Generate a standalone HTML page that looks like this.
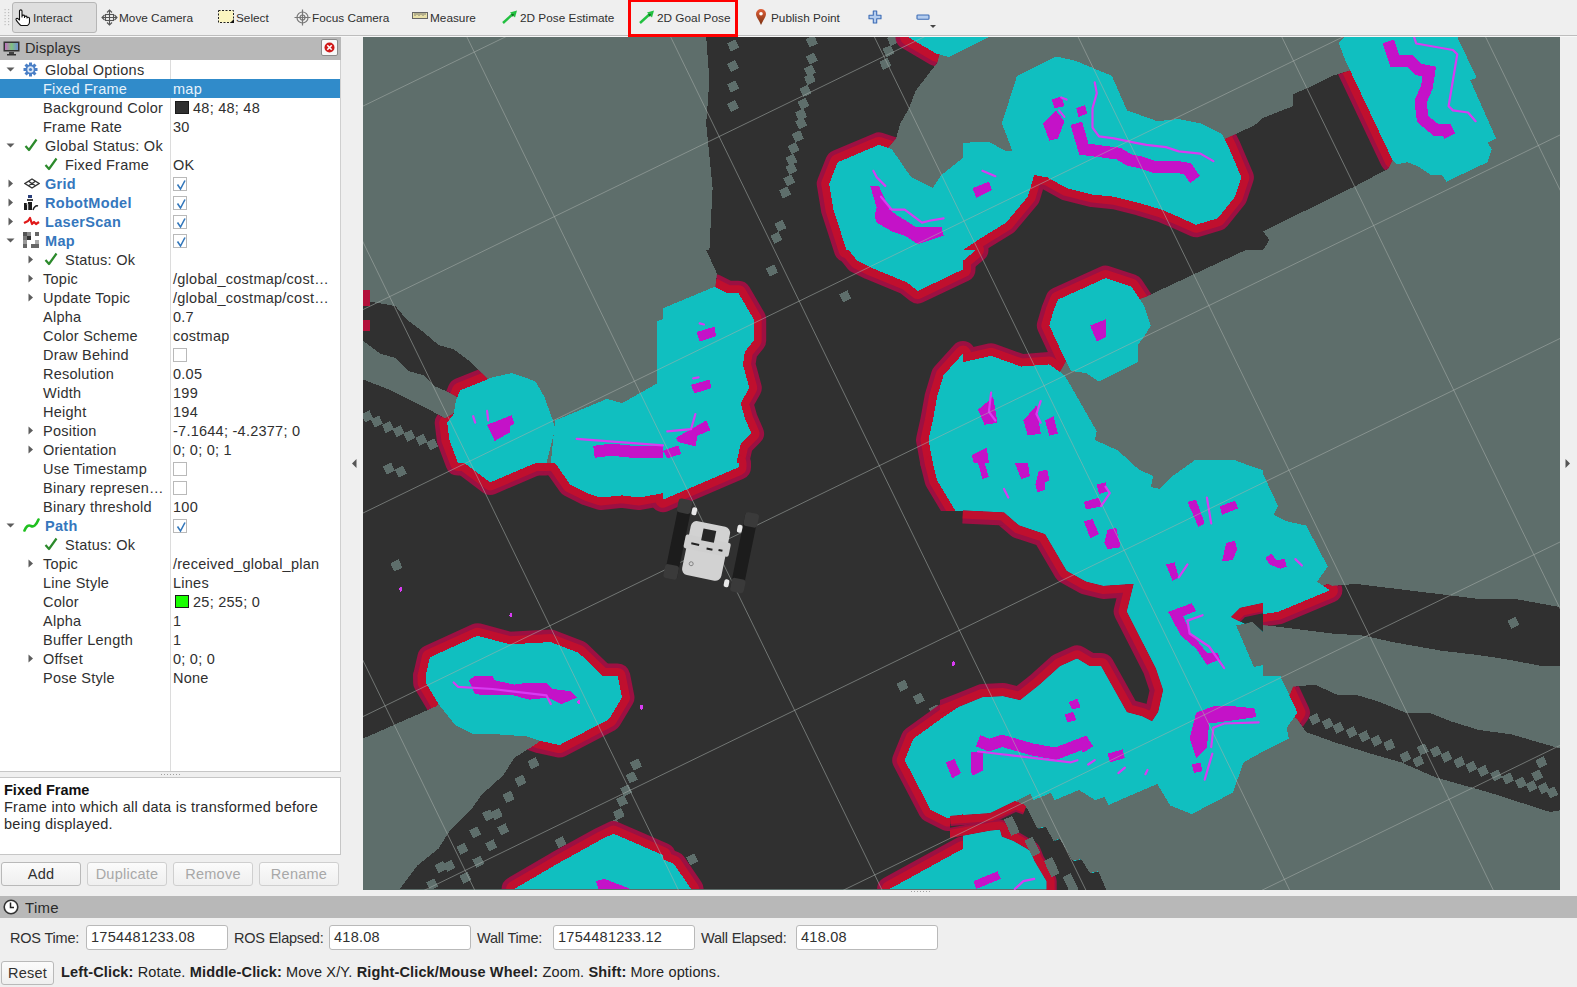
<!DOCTYPE html>
<html><head><meta charset="utf-8"><style>
*{box-sizing:border-box;margin:0;padding:0}
html,body{width:1577px;height:987px;overflow:hidden;background:#efefef;font-family:"Liberation Sans",sans-serif;color:#303030}
.a{position:absolute}
.tb{position:absolute;top:11px;font-size:11.8px;line-height:14px;white-space:nowrap;color:#303030}
.r{position:absolute;left:0;width:340px;height:19px}
.t{position:absolute;top:1px;font-size:14.5px;line-height:19px;letter-spacing:0.25px;white-space:nowrap;color:#303030}
.bb{font-weight:bold;color:#3577bd;letter-spacing:0.3px}
.cb{position:absolute;left:173px;top:3px;width:14px;height:14px;border:1px solid #b9b9b9;background:#fff}
.btn{position:absolute;top:862px;height:24px;border:1px solid #b9b9b9;border-radius:3px;background:linear-gradient(#fbfbfb,#efefef);font-size:14.5px;text-align:center;line-height:22px;letter-spacing:0.25px}
.inp{position:absolute;top:925px;height:25px;border:1px solid #b9b9b9;border-radius:3px;background:#fff;font-size:14.5px;line-height:23px;padding-left:4px;letter-spacing:0.25px;color:#303030}
.lbl{position:absolute;top:929px;font-size:14.5px;letter-spacing:-0.2px;white-space:nowrap;line-height:19px}
</style></head><body>
<!-- toolbar -->
<div class="a" style="left:0;top:0;width:1577px;height:35px;background:#efefef"></div>
<div class="a" style="left:0;top:35px;width:1577px;height:1px;background:#bdbdbd"></div><div class="a" style="left:0;top:36px;width:1577px;height:1px;background:#f8f8f8"></div>
<svg class="a" style="left:3px;top:8px" width="8" height="19"><rect x="1.5" y="1" width="1.2" height="1.2" fill="#bdbdbd"/><rect x="1.5" y="4" width="1.2" height="1.2" fill="#bdbdbd"/><rect x="1.5" y="7" width="1.2" height="1.2" fill="#bdbdbd"/><rect x="1.5" y="10" width="1.2" height="1.2" fill="#bdbdbd"/><rect x="1.5" y="13" width="1.2" height="1.2" fill="#bdbdbd"/><rect x="1.5" y="16" width="1.2" height="1.2" fill="#bdbdbd"/><rect x="5" y="1" width="1.2" height="1.2" fill="#bdbdbd"/><rect x="5" y="4" width="1.2" height="1.2" fill="#bdbdbd"/><rect x="5" y="7" width="1.2" height="1.2" fill="#bdbdbd"/><rect x="5" y="10" width="1.2" height="1.2" fill="#bdbdbd"/><rect x="5" y="13" width="1.2" height="1.2" fill="#bdbdbd"/><rect x="5" y="16" width="1.2" height="1.2" fill="#bdbdbd"/></svg>
<div class="a" style="left:12px;top:2px;width:85px;height:31px;background:#dedede;border:1px solid #b6b6b6;border-radius:3px"></div>
<svg class="a" style="left:15px;top:8px" width="17" height="18" viewBox="0 0 17 18"><path d="M4.5 12 V3 C4.5 1.5 7 1.5 7 3 V9 V8 C7 6.8 9.5 6.8 9.5 8 V9.5 V9 C9.5 7.8 12 7.8 12 9 V10 C12 9 14.5 9 14.5 10.5 V14 C14.5 16 13 17.5 12 17.5 H6 C5 17 2 13.5 1.2 12 C0.6 10.8 2 9.8 3.2 10.8 Z" fill="#fff" stroke="#111" stroke-width="1.1" stroke-linejoin="round"/></svg>
<span class="tb" style="left:33px">Interact</span>
<svg class="a" style="left:101px;top:9px" width="17" height="17" viewBox="0 0 17 17"><g fill="none" stroke="#555" stroke-width="1.1"><path d="M8.5 1 V16 M1 8.5 H16"/><path d="M6 3.5 L8.5 1 L11 3.5 M6 13.5 L8.5 16 L11 13.5 M3.5 6 L1 8.5 L3.5 11 M13.5 6 L16 8.5 L13.5 11"/><rect x="4.5" y="5.5" width="8" height="6"/></g></svg>
<span class="tb" style="left:119px">Move Camera</span>
<svg class="a" style="left:218px;top:10px" width="17" height="14" viewBox="0 0 17 14"><rect x="0.5" y="0.5" width="15" height="12" fill="#fbf5c0" stroke="#222" stroke-width="1" stroke-dasharray="2 1.5"/><path d="M16 9 V13 H12Z" fill="#111"/></svg>
<span class="tb" style="left:236px">Select</span>
<svg class="a" style="left:294px;top:9px" width="17" height="17" viewBox="0 0 17 17"><g fill="none" stroke="#777" stroke-width="1.2"><circle cx="8.5" cy="8.5" r="5.5"/><circle cx="8.5" cy="8.5" r="2.5"/><path d="M8.5 0.5 V16.5 M0.5 8.5 H16.5"/></g></svg>
<span class="tb" style="left:312px">Focus Camera</span>
<svg class="a" style="left:412px;top:12px" width="16" height="8" viewBox="0 0 16 8"><rect x="0.5" y="0.5" width="15" height="6" fill="#e8e0a8" stroke="#666" stroke-width="1"/><path d="M3 1v3M5 1v2M7 1v3M9 1v2M11 1v3M13 1v2" stroke="#666" stroke-width="0.8"/></svg>
<span class="tb" style="left:430px">Measure</span>
<svg class="a" style="left:502px;top:10px" width="16" height="14" viewBox="0 0 16 14"><path d="M1 13 L12 3" stroke="#22c040" stroke-width="2.4"/><path d="M8 2.5 L15 0.5 L13 7.5Z" fill="#22c040"/><path d="M9 4 L12 4 L11 7" fill="#127020"/></svg>
<span class="tb" style="left:520px">2D Pose Estimate</span>
<div class="a" style="left:628px;top:-1px;width:110px;height:37.5px;border:3.5px solid #ff0000"></div>
<svg class="a" style="left:639px;top:10px" width="16" height="14" viewBox="0 0 16 14"><path d="M1 13 L12 3" stroke="#22c040" stroke-width="2.4"/><path d="M8 2.5 L15 0.5 L13 7.5Z" fill="#22c040"/><path d="M9 4 L12 4 L11 7" fill="#127020"/></svg>
<span class="tb" style="left:657px">2D Goal Pose</span>
<svg class="a" style="left:755px;top:8px" width="12" height="18" viewBox="0 0 12 18"><defs><linearGradient id="pin" x1="0" y1="0" x2="0" y2="1"><stop offset="0" stop-color="#e0603a"/><stop offset="1" stop-color="#7a3010"/></linearGradient></defs><path d="M6 17 C4 12 1 9 1 6 A5 5 0 0 1 11 6 C11 9 8 12 6 17Z" fill="url(#pin)"/><circle cx="6" cy="5.8" r="1.8" fill="#fff"/></svg>
<span class="tb" style="left:771px">Publish Point</span>
<svg class="a" style="left:868px;top:10px" width="14" height="14" viewBox="0 0 14 14"><path d="M5.3 1 H8.7 V5.3 H13 V8.7 H8.7 V13 H5.3 V8.7 H1 V5.3 H5.3Z" fill="#b4cdef" stroke="#3d6cb5" stroke-width="1.1" stroke-linejoin="round"/></svg>
<svg class="a" style="left:916px;top:14px" width="14" height="7" viewBox="0 0 14 7"><rect x="1" y="1" width="12" height="4.2" rx="0.8" fill="#b4cdef" stroke="#3d6cb5" stroke-width="1.1"/></svg>
<svg class="a" style="left:930px;top:25px" width="6" height="4"><path d="M0 0 H6 L3 3Z" fill="#444"/></svg>

<!-- displays panel -->
<div class="a" style="left:0;top:37px;width:341px;height:23px;background:#b8b8b8"></div>
<svg class="a" style="left:3px;top:41px" width="17" height="15" viewBox="0 0 17 15"><rect x="0.5" y="0.5" width="16" height="10" fill="#333"/><rect x="2" y="2" width="13" height="7" fill="url(#mong)"/><rect x="6" y="11" width="5" height="2" fill="#444"/><rect x="4" y="13" width="9" height="1.5" fill="#333"/><defs><linearGradient id="mong" x1="0" x2="1"><stop offset="0" stop-color="#c070c0"/><stop offset="0.5" stop-color="#80c080"/><stop offset="1" stop-color="#7090d0"/></linearGradient></defs></svg>
<span class="a" style="left:25px;top:39px;font-size:14.5px;line-height:19px;letter-spacing:0.1px;color:#2a2a2a">Displays</span>
<div class="a" style="left:321px;top:39px;width:17px;height:17px;background:#f8f8f8;border:1px solid #8a8a8a;border-radius:2px"></div>
<svg class="a" style="left:324px;top:42px" width="11" height="11" viewBox="0 0 11 11"><circle cx="5.5" cy="5.5" r="5" fill="#d01818"/><path d="M3.3 3.3 L7.7 7.7 M7.7 3.3 L3.3 7.7" stroke="#fff" stroke-width="1.6"/></svg>
<div class="a" style="left:0;top:60px;width:341px;height:712px;background:#fff;border-right:1px solid #cfcfcf;border-bottom:1px solid #c6c6c6"></div>
<div class="a" style="left:170px;top:60px;width:1px;height:711px;background:#dcdcdc"></div>
<div class="r" style="top:60px"><svg class="a" style="left:6px;top:7px" width="9" height="6"><path d="M0.5 0.5 L8.5 0.5 L4.5 4.5Z" fill="#5c5c5c"/></svg><svg class="a" style="left:23px;top:2px" width="15" height="15" viewBox="0 0 15 15"><g fill="#4a7fc6"><circle cx="7.5" cy="7.5" r="5"/><rect x="6" y="0.5" width="3" height="3" transform="rotate(0 7.5 7.5)"/><rect x="6" y="0.5" width="3" height="3" transform="rotate(45 7.5 7.5)"/><rect x="6" y="0.5" width="3" height="3" transform="rotate(90 7.5 7.5)"/><rect x="6" y="0.5" width="3" height="3" transform="rotate(135 7.5 7.5)"/><rect x="6" y="0.5" width="3" height="3" transform="rotate(180 7.5 7.5)"/><rect x="6" y="0.5" width="3" height="3" transform="rotate(225 7.5 7.5)"/><rect x="6" y="0.5" width="3" height="3" transform="rotate(270 7.5 7.5)"/><rect x="6" y="0.5" width="3" height="3" transform="rotate(315 7.5 7.5)"/></g><circle cx="7.5" cy="7.5" r="3.2" fill="#dce8f6"/><circle cx="7.5" cy="7.5" r="1.6" fill="#4a7fc6"/></svg><span class="t" style="left:45px">Global Options</span></div><div class="r" style="top:79px"><div class="a" style="left:0;top:0;width:340px;height:19px;background:#308bca"></div><span class="t" style="left:43px;color:#e6f2fb">Fixed Frame</span><span class="t" style="left:173px;color:#e6f2fb">map</span></div><div class="r" style="top:98px"><span class="t" style="left:43px">Background Color</span><div class="a" style="left:175px;top:3px;width:14px;height:13px;background:#303030;border:1px solid #1a1a1a"></div><span class="t" style="left:193px">48; 48; 48</span></div><div class="r" style="top:117px"><span class="t" style="left:43px">Frame Rate</span><span class="t" style="left:173px">30</span></div><div class="r" style="top:136px"><svg class="a" style="left:6px;top:7px" width="9" height="6"><path d="M0.5 0.5 L8.5 0.5 L4.5 4.5Z" fill="#5c5c5c"/></svg><svg class="a" style="left:24px;top:2px" width="14" height="14"><path d="M1.5 8 L5 12 L12.5 1.5" fill="none" stroke="#2c8a2c" stroke-width="2.2" stroke-linejoin="round"/></svg><span class="t" style="left:45px">Global Status: Ok</span></div><div class="r" style="top:155px"><svg class="a" style="left:44px;top:2px" width="14" height="14"><path d="M1.5 8 L5 12 L12.5 1.5" fill="none" stroke="#2c8a2c" stroke-width="2.2" stroke-linejoin="round"/></svg><span class="t" style="left:65px">Fixed Frame</span><span class="t" style="left:173px">OK</span></div><div class="r" style="top:174px"><svg class="a" style="left:8px;top:5px" width="6" height="9"><path d="M0.5 0.5 L5 4.5 L0.5 8.5Z" fill="#5c5c5c"/></svg><svg class="a" style="left:24px;top:4px" width="16" height="11" viewBox="0 0 16 11"><path d="M8 1 L15 5.5 L8 10 L1 5.5Z M4.5 3.2 L11.5 7.8 M11.5 3.2 L4.5 7.8" fill="none" stroke="#333" stroke-width="1.3"/></svg><span class="t bb" style="left:45px">Grid</span><div class="cb"><svg class="a" style="left:1px;top:1px" width="12" height="12"><path d="M2.5 5.5 L5.5 10 L10 1.5" fill="none" stroke="#3377bb" stroke-width="1.6"/></svg></div></div><div class="r" style="top:193px"><svg class="a" style="left:8px;top:5px" width="6" height="9"><path d="M0.5 0.5 L5 4.5 L0.5 8.5Z" fill="#5c5c5c"/></svg><svg class="a" style="left:23px;top:1px" width="17" height="17" viewBox="0 0 17 17"><rect x="5" y="1" width="4" height="3" fill="#2a3f7a"/><rect x="4" y="5" width="6" height="2" fill="#444"/><path d="M1 16 V9 h3 v7Z M5 16 V8 h4 v8z" fill="#1a1a1a"/><path d="M10 16 q2 -5 5 -4" fill="none" stroke="#222" stroke-width="1.5"/><path d="M3 10h2v6" stroke="#aaa" stroke-width="0.8" fill="none"/></svg><span class="t bb" style="left:45px">RobotModel</span><div class="cb"><svg class="a" style="left:1px;top:1px" width="12" height="12"><path d="M2.5 5.5 L5.5 10 L10 1.5" fill="none" stroke="#3377bb" stroke-width="1.6"/></svg></div></div><div class="r" style="top:212px"><svg class="a" style="left:8px;top:5px" width="6" height="9"><path d="M0.5 0.5 L5 4.5 L0.5 8.5Z" fill="#5c5c5c"/></svg><svg class="a" style="left:23px;top:4px" width="17" height="11" viewBox="0 0 17 11"><path d="M1 7 L5 5 L7 2 L9 8 L11 6 L13 8 L16 6" fill="none" stroke="#e01818" stroke-width="2.2" stroke-linejoin="round"/></svg><span class="t bb" style="left:45px">LaserScan</span><div class="cb"><svg class="a" style="left:1px;top:1px" width="12" height="12"><path d="M2.5 5.5 L5.5 10 L10 1.5" fill="none" stroke="#3377bb" stroke-width="1.6"/></svg></div></div><div class="r" style="top:231px"><svg class="a" style="left:6px;top:7px" width="9" height="6"><path d="M0.5 0.5 L8.5 0.5 L4.5 4.5Z" fill="#5c5c5c"/></svg><svg class="a" style="left:23px;top:1px" width="16" height="16" viewBox="0 0 16 16"><g fill="#555"><rect x="0" y="0" width="4" height="4"/><rect x="4" y="0" width="4" height="4" fill="#888"/><rect x="0" y="4" width="4" height="4" fill="#777"/><rect x="4" y="4" width="4" height="4" fill="#333"/><rect x="12" y="0" width="4" height="4" fill="#666"/><rect x="0" y="8" width="4" height="4" fill="#999"/><rect x="0" y="12" width="4" height="4" fill="#666"/><rect x="8" y="12" width="8" height="4" fill="#666"/><rect x="12" y="8" width="4" height="4" fill="#aaa"/></g></svg><span class="t bb" style="left:45px">Map</span><div class="cb"><svg class="a" style="left:1px;top:1px" width="12" height="12"><path d="M2.5 5.5 L5.5 10 L10 1.5" fill="none" stroke="#3377bb" stroke-width="1.6"/></svg></div></div><div class="r" style="top:250px"><svg class="a" style="left:28px;top:5px" width="6" height="9"><path d="M0.5 0.5 L5 4.5 L0.5 8.5Z" fill="#5c5c5c"/></svg><svg class="a" style="left:44px;top:2px" width="14" height="14"><path d="M1.5 8 L5 12 L12.5 1.5" fill="none" stroke="#2c8a2c" stroke-width="2.2" stroke-linejoin="round"/></svg><span class="t" style="left:65px">Status: Ok</span></div><div class="r" style="top:269px"><svg class="a" style="left:28px;top:5px" width="6" height="9"><path d="M0.5 0.5 L5 4.5 L0.5 8.5Z" fill="#5c5c5c"/></svg><span class="t" style="left:43px">Topic</span><span class="t" style="left:173px">/global_costmap/cost…</span></div><div class="r" style="top:288px"><svg class="a" style="left:28px;top:5px" width="6" height="9"><path d="M0.5 0.5 L5 4.5 L0.5 8.5Z" fill="#5c5c5c"/></svg><span class="t" style="left:43px">Update Topic</span><span class="t" style="left:173px">/global_costmap/cost…</span></div><div class="r" style="top:307px"><span class="t" style="left:43px">Alpha</span><span class="t" style="left:173px">0.7</span></div><div class="r" style="top:326px"><span class="t" style="left:43px">Color Scheme</span><span class="t" style="left:173px">costmap</span></div><div class="r" style="top:345px"><span class="t" style="left:43px">Draw Behind</span><div class="cb"></div></div><div class="r" style="top:364px"><span class="t" style="left:43px">Resolution</span><span class="t" style="left:173px">0.05</span></div><div class="r" style="top:383px"><span class="t" style="left:43px">Width</span><span class="t" style="left:173px">199</span></div><div class="r" style="top:402px"><span class="t" style="left:43px">Height</span><span class="t" style="left:173px">194</span></div><div class="r" style="top:421px"><svg class="a" style="left:28px;top:5px" width="6" height="9"><path d="M0.5 0.5 L5 4.5 L0.5 8.5Z" fill="#5c5c5c"/></svg><span class="t" style="left:43px">Position</span><span class="t" style="left:173px">-7.1644; -4.2377; 0</span></div><div class="r" style="top:440px"><svg class="a" style="left:28px;top:5px" width="6" height="9"><path d="M0.5 0.5 L5 4.5 L0.5 8.5Z" fill="#5c5c5c"/></svg><span class="t" style="left:43px">Orientation</span><span class="t" style="left:173px">0; 0; 0; 1</span></div><div class="r" style="top:459px"><span class="t" style="left:43px">Use Timestamp</span><div class="cb"></div></div><div class="r" style="top:478px"><span class="t" style="left:43px">Binary represen…</span><div class="cb"></div></div><div class="r" style="top:497px"><span class="t" style="left:43px">Binary threshold</span><span class="t" style="left:173px">100</span></div><div class="r" style="top:516px"><svg class="a" style="left:6px;top:7px" width="9" height="6"><path d="M0.5 0.5 L8.5 0.5 L4.5 4.5Z" fill="#5c5c5c"/></svg><svg class="a" style="left:23px;top:2px" width="17" height="14" viewBox="0 0 17 14"><path d="M1.5 12.5 Q4 6 8 8 T15.5 1.5" fill="none" stroke="#20c020" stroke-width="2.6" stroke-linecap="round"/></svg><span class="t bb" style="left:45px">Path</span><div class="cb"><svg class="a" style="left:1px;top:1px" width="12" height="12"><path d="M2.5 5.5 L5.5 10 L10 1.5" fill="none" stroke="#3377bb" stroke-width="1.6"/></svg></div></div><div class="r" style="top:535px"><svg class="a" style="left:44px;top:2px" width="14" height="14"><path d="M1.5 8 L5 12 L12.5 1.5" fill="none" stroke="#2c8a2c" stroke-width="2.2" stroke-linejoin="round"/></svg><span class="t" style="left:65px">Status: Ok</span></div><div class="r" style="top:554px"><svg class="a" style="left:28px;top:5px" width="6" height="9"><path d="M0.5 0.5 L5 4.5 L0.5 8.5Z" fill="#5c5c5c"/></svg><span class="t" style="left:43px">Topic</span><span class="t" style="left:173px">/received_global_plan</span></div><div class="r" style="top:573px"><span class="t" style="left:43px">Line Style</span><span class="t" style="left:173px">Lines</span></div><div class="r" style="top:592px"><span class="t" style="left:43px">Color</span><div class="a" style="left:175px;top:3px;width:14px;height:13px;background:#19ff00;border:1px solid #1a1a1a"></div><span class="t" style="left:193px">25; 255; 0</span></div><div class="r" style="top:611px"><span class="t" style="left:43px">Alpha</span><span class="t" style="left:173px">1</span></div><div class="r" style="top:630px"><span class="t" style="left:43px">Buffer Length</span><span class="t" style="left:173px">1</span></div><div class="r" style="top:649px"><svg class="a" style="left:28px;top:5px" width="6" height="9"><path d="M0.5 0.5 L5 4.5 L0.5 8.5Z" fill="#5c5c5c"/></svg><span class="t" style="left:43px">Offset</span><span class="t" style="left:173px">0; 0; 0</span></div><div class="r" style="top:668px"><span class="t" style="left:43px">Pose Style</span><span class="t" style="left:173px">None</span></div>
<div class="a" style="left:160px;top:774px;width:20px;height:1px;background-image:radial-gradient(#a0a0a0 0.6px,transparent 0.8px);background-size:3px 1px"></div>
<div class="a" style="left:0;top:777px;width:341px;height:78px;background:#fff;border:1px solid #c6c6c6;border-left:none"></div>
<span class="a" style="left:4px;top:782px;font-size:14.5px;line-height:17px;font-weight:bold;color:#111;letter-spacing:0px">Fixed Frame</span>
<span class="a" style="left:4px;top:799px;font-size:14.5px;line-height:17px;letter-spacing:0.25px;color:#2a2a2a;white-space:nowrap">Frame into which all data is transformed before</span>
<span class="a" style="left:4px;top:816px;font-size:14.5px;line-height:17px;letter-spacing:0.25px;color:#2a2a2a">being displayed.</span>
<div class="btn" style="left:1px;width:80px">Add</div>
<div class="btn" style="left:87px;width:80px;color:#a8a8a8;border-color:#cfcfcf">Duplicate</div>
<div class="btn" style="left:173px;width:80px;color:#a8a8a8;border-color:#cfcfcf">Remove</div>
<div class="btn" style="left:259px;width:80px;color:#a8a8a8;border-color:#cfcfcf">Rename</div>

<!-- splitters -->
<svg class="a" style="left:352px;top:459px" width="5" height="9"><path d="M4.5 0 V9 L0 4.5Z" fill="#555"/></svg>
<svg class="a" style="left:1565px;top:459px" width="5" height="9"><path d="M0.5 0 V9 L5 4.5Z" fill="#555"/></svg>

<!-- map -->
<div class="a" style="left:363px;top:37px;width:1197px;height:853px;overflow:hidden"><svg width="1197" height="853" viewBox="0 0 1197 853" shape-rendering="crispEdges">
<rect width="1197" height="853" fill="#5e6e6b"/>
<g fill="#303030"><polygon points="343.2,0.0 580.6,0.0 574.1,25.9 552.5,54.0 546.1,71.2 537.4,86.3 533.1,101.4 515.8,120.9 494.3,140.3 483.5,213.0 346.4,213.0 349.6,151.1 343.2,86.3 346.4,43.2"/><polygon points="600.0,213.0 621.6,194.3 654.0,151.1 671.2,129.5 703.6,140.3 751.1,151.1 813.7,168.4 854.7,170.5 867.6,140.3 859.0,103.6 900.0,84.2 900.0,213.0"/><polygon points="900.0,80.9 930.2,69.1 930.2,57.2 945.3,50.7 969.1,38.9 990.7,32.4 1020.9,97.1 1029.5,123.0 1025.2,131.7 992.8,148.9 900.0,194.3 906.5,202.9 900.0,213.0 835.2,213.0 874.1,103.6"/><polygon points="0.0,269.1 8.6,264.8 32.4,269.1 43.2,282.1 60.4,295.0 75.5,308.0 90.7,312.3 107.9,325.2 129.5,346.8 101.4,364.1 86.3,355.5 71.2,349.0 60.4,338.2 45.3,333.9 32.4,320.9 17.3,316.6 0.0,303.7"/><polygon points="0.0,342.5 28.1,353.3 62.6,370.6 82.0,381.4 97.1,372.7 101.4,426.0 0.0,426.0"/><polygon points="343.2,213.0 600.0,213.0 600.0,426.0 300.0,426.0 300.0,282.1 351.8,256.2 354.0,236.7"/><polygon points="600.0,213.0 882.8,213.0 783.5,259.4 729.5,277.8 697.1,333.9 675.5,342.5 656.1,342.5 628.1,329.6 600.0,333.9"/><polygon points="0.0,426.0 300.0,426.0 300.0,639.0 0.0,639.0"/><polygon points="300.0,426.0 600.0,426.0 600.0,639.0 300.0,639.0"/><polygon points="900.0,574.9 964.8,546.9 969.1,549.0 992.8,546.9 1081.3,557.7 1115.8,562.0 1152.5,562.0 1200.0,570.6 1200.0,628.9 1178.4,628.9 1143.9,622.4 1115.8,618.1 1079.1,613.8 1029.5,605.1 1001.4,598.7 969.1,596.5 934.5,592.2 900.0,587.9"/><polygon points="0.0,639.0 300.0,639.0 300.0,852.0 0.0,852.0"/><polygon points="300.0,639.0 600.0,639.0 600.0,852.0 300.0,852.0"/><polygon points="930.2,649.8 951.8,647.6 975.5,658.4 995.0,658.4 1016.6,664.9 1042.5,675.7 1066.2,675.7 1087.8,684.3 1115.8,693.0 1148.2,697.3 1200.0,712.4 1200.0,772.8 1187.1,775.0 1126.6,755.6 1072.7,740.4 1038.1,725.3 1007.9,716.7 973.4,705.9 943.2,695.1 934.5,682.2 921.6,671.4"/></g>
<g fill="#5e6e6b"><rect x="365.6" y="4.1" width="9" height="9" transform="rotate(-26 370.1 8.6)"/><rect x="365.6" y="24.6" width="9" height="9" transform="rotate(-26 370.1 29.1)"/><rect x="365.6" y="45.1" width="9" height="9" transform="rotate(-26 370.1 49.6)"/><rect x="365.6" y="64.6" width="9" height="9" transform="rotate(-26 370.1 69.1)"/><rect x="444.4" y="-0.2" width="9" height="9" transform="rotate(-26 448.9 4.3)"/><rect x="444.4" y="17.1" width="9" height="9" transform="rotate(-26 448.9 21.6)"/><rect x="442.3" y="29.0" width="9" height="9" transform="rotate(-26 446.8 33.5)"/><rect x="442.3" y="37.6" width="9" height="9" transform="rotate(-26 446.8 42.1)"/><rect x="438.0" y="49.5" width="9" height="9" transform="rotate(-26 442.5 54.0)"/><rect x="435.8" y="62.4" width="9" height="9" transform="rotate(-26 440.3 66.9)"/><rect x="433.6" y="73.2" width="9" height="9" transform="rotate(-26 438.1 77.7)"/><rect x="433.6" y="81.8" width="9" height="9" transform="rotate(-26 438.1 86.3)"/><rect x="430.4" y="94.8" width="9" height="9" transform="rotate(-26 434.9 99.3)"/><rect x="426.1" y="106.7" width="9" height="9" transform="rotate(-26 430.6 111.2)"/><rect x="423.9" y="118.5" width="9" height="9" transform="rotate(-26 428.4 123.0)"/><rect x="423.9" y="127.2" width="9" height="9" transform="rotate(-26 428.4 131.7)"/><rect x="421.8" y="139.0" width="9" height="9" transform="rotate(-26 426.3 143.5)"/><rect x="417.5" y="150.9" width="9" height="9" transform="rotate(-26 422.0 155.4)"/><rect x="413.1" y="184.4" width="9" height="9" transform="rotate(-26 417.6 188.9)"/><rect x="408.8" y="196.2" width="9" height="9" transform="rotate(-26 413.3 200.7)"/><rect x="525.4" y="-1.3" width="9" height="9" transform="rotate(-26 529.9 3.2)"/><rect x="521.1" y="9.5" width="9" height="9" transform="rotate(-26 525.6 14.0)"/><rect x="517.8" y="22.5" width="9" height="9" transform="rotate(-26 522.3 27.0)"/><rect x="-0.2" y="374.7" width="9" height="9" transform="rotate(-26 4.3 379.2)"/><rect x="9.5" y="380.1" width="9" height="9" transform="rotate(-26 14.0 384.6)"/><rect x="20.3" y="385.5" width="9" height="9" transform="rotate(-26 24.8 390.0)"/><rect x="31.1" y="389.8" width="9" height="9" transform="rotate(-26 35.6 394.3)"/><rect x="41.9" y="394.1" width="9" height="9" transform="rotate(-26 46.4 398.6)"/><rect x="53.8" y="398.4" width="9" height="9" transform="rotate(-26 58.3 402.9)"/><rect x="64.6" y="402.8" width="9" height="9" transform="rotate(-26 69.1 407.3)"/><rect x="79.7" y="406.0" width="9" height="9" transform="rotate(-26 84.2 410.5)"/><rect x="404.5" y="229.0" width="9" height="9" transform="rotate(-26 409.0 233.5)"/><rect x="477.9" y="254.9" width="9" height="9" transform="rotate(-26 482.4 259.4)"/><rect x="494.1" y="226.8" width="9" height="9" transform="rotate(-26 498.6 231.3)"/><rect x="21.4" y="426.9" width="9" height="9" transform="rotate(-26 25.9 431.4)"/><rect x="33.3" y="430.1" width="9" height="9" transform="rotate(-26 37.8 434.6)"/><rect x="29.0" y="524.0" width="9" height="9" transform="rotate(-26 33.5 528.5)"/><rect x="779.0" y="455.0" width="9" height="9" transform="rotate(-26 783.5 459.5)"/><rect x="1145.9" y="581.2" width="9" height="9" transform="rotate(-26 1150.4 585.7)"/><rect x="166.0" y="721.9" width="9" height="9" transform="rotate(-26 170.5 726.4)"/><rect x="153.1" y="739.2" width="9" height="9" transform="rotate(-26 157.6 743.7)"/><rect x="141.2" y="755.4" width="9" height="9" transform="rotate(-26 145.7 759.9)"/><rect x="120.7" y="773.7" width="9" height="9" transform="rotate(-26 125.2 778.2)"/><rect x="129.3" y="772.6" width="9" height="9" transform="rotate(-26 133.8 777.1)"/><rect x="135.8" y="787.7" width="9" height="9" transform="rotate(-26 140.3 792.2)"/><rect x="107.7" y="791.0" width="9" height="9" transform="rotate(-26 112.2 795.5)"/><rect x="123.9" y="803.9" width="9" height="9" transform="rotate(-26 128.4 808.4)"/><rect x="94.8" y="807.2" width="9" height="9" transform="rotate(-26 99.3 811.7)"/><rect x="111.0" y="820.1" width="9" height="9" transform="rotate(-26 115.5 824.6)"/><rect x="73.2" y="825.5" width="9" height="9" transform="rotate(-26 77.7 830.0)"/><rect x="81.8" y="824.4" width="9" height="9" transform="rotate(-26 86.3 828.9)"/><rect x="98.0" y="836.3" width="9" height="9" transform="rotate(-26 102.5 840.8)"/><rect x="64.6" y="842.8" width="9" height="9" transform="rotate(-26 69.1 847.3)"/><rect x="268.5" y="723.0" width="9" height="9" transform="rotate(-26 273.0 727.5)"/><rect x="264.2" y="735.9" width="9" height="9" transform="rotate(-26 268.7 740.4)"/><rect x="258.8" y="748.9" width="9" height="9" transform="rotate(-26 263.3 753.4)"/><rect x="254.5" y="759.7" width="9" height="9" transform="rotate(-26 259.0 764.2)"/><rect x="251.3" y="772.6" width="9" height="9" transform="rotate(-26 255.8 777.1)"/><rect x="247.0" y="783.4" width="9" height="9" transform="rotate(-26 251.5 787.9)"/><rect x="242.6" y="795.3" width="9" height="9" transform="rotate(-26 247.1 799.8)"/><rect x="193.0" y="800.7" width="9" height="9" transform="rotate(-26 197.5 805.2)"/><rect x="535.1" y="644.2" width="9" height="9" transform="rotate(-26 539.6 648.7)"/><rect x="551.3" y="657.2" width="9" height="9" transform="rotate(-26 555.8 661.7)"/><rect x="567.5" y="669.0" width="9" height="9" transform="rotate(-26 572.0 673.5)"/><rect x="324.6" y="818.0" width="9" height="9" transform="rotate(-26 329.1 822.5)"/><rect x="934.4" y="673.4" width="9" height="9" transform="rotate(-26 938.9 677.9)"/><rect x="947.3" y="677.7" width="9" height="9" transform="rotate(-26 951.8 682.2)"/><rect x="960.3" y="682.0" width="9" height="9" transform="rotate(-26 964.8 686.5)"/><rect x="971.0" y="686.3" width="9" height="9" transform="rotate(-26 975.5 690.8)"/><rect x="984.0" y="690.6" width="9" height="9" transform="rotate(-26 988.5 695.1)"/><rect x="996.9" y="694.9" width="9" height="9" transform="rotate(-26 1001.4 699.4)"/><rect x="1008.8" y="699.3" width="9" height="9" transform="rotate(-26 1013.3 703.8)"/><rect x="1021.8" y="703.6" width="9" height="9" transform="rotate(-26 1026.3 708.1)"/><rect x="1038.0" y="715.4" width="9" height="9" transform="rotate(-26 1042.5 719.9)"/><rect x="1050.9" y="719.8" width="9" height="9" transform="rotate(-26 1055.4 724.3)"/><rect x="1055.2" y="707.9" width="9" height="9" transform="rotate(-26 1059.7 712.4)"/><rect x="1068.2" y="710.0" width="9" height="9" transform="rotate(-26 1072.7 714.5)"/><rect x="1079.0" y="715.4" width="9" height="9" transform="rotate(-26 1083.5 719.9)"/><rect x="1091.9" y="720.8" width="9" height="9" transform="rotate(-26 1096.4 725.3)"/><rect x="1103.8" y="725.2" width="9" height="9" transform="rotate(-26 1108.3 729.7)"/><rect x="1115.7" y="729.5" width="9" height="9" transform="rotate(-26 1120.2 734.0)"/><rect x="1128.6" y="733.8" width="9" height="9" transform="rotate(-26 1133.1 738.3)"/><rect x="1140.5" y="737.0" width="9" height="9" transform="rotate(-26 1145.0 741.5)"/><rect x="1153.4" y="741.3" width="9" height="9" transform="rotate(-26 1157.9 745.8)"/><rect x="1164.2" y="744.6" width="9" height="9" transform="rotate(-26 1168.7 749.1)"/><rect x="1173.9" y="720.8" width="9" height="9" transform="rotate(-26 1178.4 725.3)"/><rect x="1169.6" y="733.8" width="9" height="9" transform="rotate(-26 1174.1 738.3)"/><rect x="1176.1" y="746.7" width="9" height="9" transform="rotate(-26 1180.6 751.2)"/><rect x="1184.7" y="751.1" width="9" height="9" transform="rotate(-26 1189.2 755.6)"/></g>
<defs><clipPath id="darkclip"><polygon points="343.2,0.0 580.6,0.0 574.1,25.9 552.5,54.0 546.1,71.2 537.4,86.3 533.1,101.4 515.8,120.9 494.3,140.3 483.5,213.0 346.4,213.0 349.6,151.1 343.2,86.3 346.4,43.2"/><polygon points="600.0,213.0 621.6,194.3 654.0,151.1 671.2,129.5 703.6,140.3 751.1,151.1 813.7,168.4 854.7,170.5 867.6,140.3 859.0,103.6 900.0,84.2 900.0,213.0"/><polygon points="900.0,80.9 930.2,69.1 930.2,57.2 945.3,50.7 969.1,38.9 990.7,32.4 1020.9,97.1 1029.5,123.0 1025.2,131.7 992.8,148.9 900.0,194.3 906.5,202.9 900.0,213.0 835.2,213.0 874.1,103.6"/><polygon points="0.0,269.1 8.6,264.8 32.4,269.1 43.2,282.1 60.4,295.0 75.5,308.0 90.7,312.3 107.9,325.2 129.5,346.8 101.4,364.1 86.3,355.5 71.2,349.0 60.4,338.2 45.3,333.9 32.4,320.9 17.3,316.6 0.0,303.7"/><polygon points="0.0,342.5 28.1,353.3 62.6,370.6 82.0,381.4 97.1,372.7 101.4,426.0 0.0,426.0"/><polygon points="343.2,213.0 600.0,213.0 600.0,426.0 300.0,426.0 300.0,282.1 351.8,256.2 354.0,236.7"/><polygon points="600.0,213.0 882.8,213.0 783.5,259.4 729.5,277.8 697.1,333.9 675.5,342.5 656.1,342.5 628.1,329.6 600.0,333.9"/><polygon points="0.0,426.0 300.0,426.0 300.0,639.0 0.0,639.0"/><polygon points="300.0,426.0 600.0,426.0 600.0,639.0 300.0,639.0"/><polygon points="900.0,574.9 964.8,546.9 969.1,549.0 992.8,546.9 1081.3,557.7 1115.8,562.0 1152.5,562.0 1200.0,570.6 1200.0,628.9 1178.4,628.9 1143.9,622.4 1115.8,618.1 1079.1,613.8 1029.5,605.1 1001.4,598.7 969.1,596.5 934.5,592.2 900.0,587.9"/><polygon points="0.0,639.0 300.0,639.0 300.0,852.0 0.0,852.0"/><polygon points="300.0,639.0 600.0,639.0 600.0,852.0 300.0,852.0"/><polygon points="930.2,649.8 951.8,647.6 975.5,658.4 995.0,658.4 1016.6,664.9 1042.5,675.7 1066.2,675.7 1087.8,684.3 1115.8,693.0 1148.2,697.3 1200.0,712.4 1200.0,772.8 1187.1,775.0 1126.6,755.6 1072.7,740.4 1038.1,725.3 1007.9,716.7 973.4,705.9 943.2,695.1 934.5,682.2 921.6,671.4"/></clipPath></defs>
<g clip-path="url(#darkclip)" fill="none" stroke-linejoin="round" shape-rendering="geometricPrecision"><g stroke="#9c1042" stroke-width="25"><polygon points="545.0,0.0 626.0,0.0 586.0,20.0 573.0,16.5"/><polygon points="474.8,125.2 515.8,107.9 528.8,112.2 548.2,140.3 569.8,151.1 578.4,138.1 600.0,120.9 600.0,213.0 483.5,213.0 470.5,172.7 466.2,146.8"/><polygon points="600.0,105.8 625.9,104.7 643.2,114.4 649.6,114.4 638.9,86.3 654.0,38.9 692.8,19.4 712.2,23.7 748.9,38.9 764.0,73.4 794.3,84.2 815.8,82.0 837.4,86.3 859.0,97.1 865.5,110.1 878.4,140.3 872.0,159.7 854.7,181.3 833.1,187.8 813.7,179.1 798.6,172.7 777.0,166.2 751.1,159.7 729.5,157.6 703.6,151.1 684.2,140.3 671.2,138.1 664.8,159.7 643.2,185.6 615.1,202.9 600.0,213.0"/><polygon points="975.5,5.4 982.0,0.0 1094.3,0.0 1113.7,41.0 1107.2,43.2 1133.1,101.4 1124.5,105.8 1128.8,112.2 1124.5,125.2 1083.5,144.6 1079.1,138.1 1068.4,138.1 1055.4,129.5 1044.6,125.2 1033.8,127.3 1029.5,123.0 982.0,22.7"/><polygon points="92.8,364.1 97.1,353.3 129.5,340.3 148.9,336.0 161.9,340.3 172.7,344.7 181.3,359.8 189.9,383.5 192.1,392.1 183.5,426.0 95.0,426.0 86.3,402.9 84.2,385.7 90.7,377.0"/><polygon points="192.1,383.5 243.9,361.9 259.0,366.2 293.5,346.8 293.5,284.2 300.0,282.1 300.0,426.0 187.8,426.0"/><polygon points="300.0,271.3 351.8,249.7 364.8,256.2 375.5,256.2 390.7,282.1 390.7,303.7 382.0,314.4 379.9,327.4 386.3,351.1 377.7,366.2 382.0,381.4 388.5,396.5 377.7,407.3 373.4,426.0 300.0,426.0"/><polygon points="485.6,213.0 600.0,213.0 600.0,232.4 554.7,254.0 543.9,245.4 507.2,230.3 494.3,223.8"/><polygon points="600.0,316.6 580.6,338.2 574.1,359.8 569.8,383.5 565.5,402.9 569.8,426.0 600.0,426.0"/><polygon points="695.0,262.6 742.5,241.1 768.4,249.7 781.3,269.1 787.8,288.5 781.3,299.3 774.8,308.0 774.8,325.2 736.0,344.7 723.0,336.0 707.9,333.9 699.3,316.6 686.3,288.5 690.7,273.4"/><polygon points="600.0,213.0 613.0,213.0 600.0,223.8"/><polygon points="600.0,325.2 628.1,318.8 658.3,329.6 686.3,327.4 701.4,338.2 707.9,349.0 733.8,394.3 731.7,402.9 755.4,413.7 768.4,426.0 600.0,426.0"/><polygon points="101.4,426.0 127.3,445.4 172.7,426.0"/><polygon points="192.1,426.0 207.2,447.6 224.5,456.2 237.4,460.5 259.0,458.4 276.3,460.5 300.0,456.2 300.0,426.0"/><polygon points="66.9,620.3 114.4,598.7 146.8,607.3 187.8,605.1 215.8,615.9 239.6,639.0 62.6,639.0"/><polygon points="300.0,426.0 375.5,426.0 375.5,430.3 300.0,462.7"/><polygon points="569.8,426.0 600.0,426.0 600.0,475.6 593.5,475.6 574.1,443.3"/><polygon points="900.0,436.8 915.1,469.2 910.8,477.8 923.7,484.3 943.2,488.6 964.8,529.6 954.0,544.7 966.9,553.3 915.1,574.9 900.0,577.1"/><polygon points="62.6,639.0 254.7,639.0 259.0,660.6 246.1,682.2 196.4,708.1 177.0,703.8 164.0,699.4 133.8,697.3 110.1,697.3 92.8,688.6 75.5,667.1 62.6,645.5"/><polygon points="151.1,852.0 194.3,826.8 237.4,803.0 250.4,796.6 300.0,818.1 300.0,852.0"/><polygon points="300.0,822.5 310.8,826.8 328.1,852.0 300.0,852.0"/><polygon points="580.6,680.0 600.0,667.1 600.0,777.1 584.9,781.5 567.6,772.8 541.7,723.2 550.4,701.6"/><polygon points="526.6,852.0 600.0,811.7 600.0,852.0"/><polygon points="900.0,639.0 917.3,639.0 934.5,675.7 923.7,690.8 925.9,701.6 900.0,714.5"/></g><g stroke="#c00f2e" stroke-width="16"><polygon points="545.0,0.0 626.0,0.0 586.0,20.0 573.0,16.5"/><polygon points="474.8,125.2 515.8,107.9 528.8,112.2 548.2,140.3 569.8,151.1 578.4,138.1 600.0,120.9 600.0,213.0 483.5,213.0 470.5,172.7 466.2,146.8"/><polygon points="600.0,105.8 625.9,104.7 643.2,114.4 649.6,114.4 638.9,86.3 654.0,38.9 692.8,19.4 712.2,23.7 748.9,38.9 764.0,73.4 794.3,84.2 815.8,82.0 837.4,86.3 859.0,97.1 865.5,110.1 878.4,140.3 872.0,159.7 854.7,181.3 833.1,187.8 813.7,179.1 798.6,172.7 777.0,166.2 751.1,159.7 729.5,157.6 703.6,151.1 684.2,140.3 671.2,138.1 664.8,159.7 643.2,185.6 615.1,202.9 600.0,213.0"/><polygon points="975.5,5.4 982.0,0.0 1094.3,0.0 1113.7,41.0 1107.2,43.2 1133.1,101.4 1124.5,105.8 1128.8,112.2 1124.5,125.2 1083.5,144.6 1079.1,138.1 1068.4,138.1 1055.4,129.5 1044.6,125.2 1033.8,127.3 1029.5,123.0 982.0,22.7"/><polygon points="92.8,364.1 97.1,353.3 129.5,340.3 148.9,336.0 161.9,340.3 172.7,344.7 181.3,359.8 189.9,383.5 192.1,392.1 183.5,426.0 95.0,426.0 86.3,402.9 84.2,385.7 90.7,377.0"/><polygon points="192.1,383.5 243.9,361.9 259.0,366.2 293.5,346.8 293.5,284.2 300.0,282.1 300.0,426.0 187.8,426.0"/><polygon points="300.0,271.3 351.8,249.7 364.8,256.2 375.5,256.2 390.7,282.1 390.7,303.7 382.0,314.4 379.9,327.4 386.3,351.1 377.7,366.2 382.0,381.4 388.5,396.5 377.7,407.3 373.4,426.0 300.0,426.0"/><polygon points="485.6,213.0 600.0,213.0 600.0,232.4 554.7,254.0 543.9,245.4 507.2,230.3 494.3,223.8"/><polygon points="600.0,316.6 580.6,338.2 574.1,359.8 569.8,383.5 565.5,402.9 569.8,426.0 600.0,426.0"/><polygon points="695.0,262.6 742.5,241.1 768.4,249.7 781.3,269.1 787.8,288.5 781.3,299.3 774.8,308.0 774.8,325.2 736.0,344.7 723.0,336.0 707.9,333.9 699.3,316.6 686.3,288.5 690.7,273.4"/><polygon points="600.0,213.0 613.0,213.0 600.0,223.8"/><polygon points="600.0,325.2 628.1,318.8 658.3,329.6 686.3,327.4 701.4,338.2 707.9,349.0 733.8,394.3 731.7,402.9 755.4,413.7 768.4,426.0 600.0,426.0"/><polygon points="101.4,426.0 127.3,445.4 172.7,426.0"/><polygon points="192.1,426.0 207.2,447.6 224.5,456.2 237.4,460.5 259.0,458.4 276.3,460.5 300.0,456.2 300.0,426.0"/><polygon points="66.9,620.3 114.4,598.7 146.8,607.3 187.8,605.1 215.8,615.9 239.6,639.0 62.6,639.0"/><polygon points="300.0,426.0 375.5,426.0 375.5,430.3 300.0,462.7"/><polygon points="569.8,426.0 600.0,426.0 600.0,475.6 593.5,475.6 574.1,443.3"/><polygon points="900.0,436.8 915.1,469.2 910.8,477.8 923.7,484.3 943.2,488.6 964.8,529.6 954.0,544.7 966.9,553.3 915.1,574.9 900.0,577.1"/><polygon points="62.6,639.0 254.7,639.0 259.0,660.6 246.1,682.2 196.4,708.1 177.0,703.8 164.0,699.4 133.8,697.3 110.1,697.3 92.8,688.6 75.5,667.1 62.6,645.5"/><polygon points="151.1,852.0 194.3,826.8 237.4,803.0 250.4,796.6 300.0,818.1 300.0,852.0"/><polygon points="300.0,822.5 310.8,826.8 328.1,852.0 300.0,852.0"/><polygon points="580.6,680.0 600.0,667.1 600.0,777.1 584.9,781.5 567.6,772.8 541.7,723.2 550.4,701.6"/><polygon points="526.6,852.0 600.0,811.7 600.0,852.0"/><polygon points="900.0,639.0 917.3,639.0 934.5,675.7 923.7,690.8 925.9,701.6 900.0,714.5"/></g></g>
<g fill="none" stroke-linejoin="round" stroke-linecap="butt" shape-rendering="geometricPrecision"><polyline points="0.0,253.0 0.0,269.0" stroke="#b3103a" stroke-width="14"/><polyline points="0.0,283.0 0.0,294.0" stroke="#b3103a" stroke-width="14"/></g>
<g fill="#10bfc0"><polygon points="545.0,0.0 626.0,0.0 586.0,20.0 573.0,16.5"/><polygon points="474.8,125.2 515.8,107.9 528.8,112.2 548.2,140.3 569.8,151.1 578.4,138.1 600.0,120.9 600.0,213.0 483.5,213.0 470.5,172.7 466.2,146.8"/><polygon points="600.0,105.8 625.9,104.7 643.2,114.4 649.6,114.4 638.9,86.3 654.0,38.9 692.8,19.4 712.2,23.7 748.9,38.9 764.0,73.4 794.3,84.2 815.8,82.0 837.4,86.3 859.0,97.1 865.5,110.1 878.4,140.3 872.0,159.7 854.7,181.3 833.1,187.8 813.7,179.1 798.6,172.7 777.0,166.2 751.1,159.7 729.5,157.6 703.6,151.1 684.2,140.3 671.2,138.1 664.8,159.7 643.2,185.6 615.1,202.9 600.0,213.0"/><polygon points="975.5,5.4 982.0,0.0 1094.3,0.0 1113.7,41.0 1107.2,43.2 1133.1,101.4 1124.5,105.8 1128.8,112.2 1124.5,125.2 1083.5,144.6 1079.1,138.1 1068.4,138.1 1055.4,129.5 1044.6,125.2 1033.8,127.3 1029.5,123.0 982.0,22.7"/><polygon points="92.8,364.1 97.1,353.3 129.5,340.3 148.9,336.0 161.9,340.3 172.7,344.7 181.3,359.8 189.9,383.5 192.1,392.1 183.5,426.0 95.0,426.0 86.3,402.9 84.2,385.7 90.7,377.0"/><polygon points="192.1,383.5 243.9,361.9 259.0,366.2 293.5,346.8 293.5,284.2 300.0,282.1 300.0,426.0 187.8,426.0"/><polygon points="300.0,271.3 351.8,249.7 364.8,256.2 375.5,256.2 390.7,282.1 390.7,303.7 382.0,314.4 379.9,327.4 386.3,351.1 377.7,366.2 382.0,381.4 388.5,396.5 377.7,407.3 373.4,426.0 300.0,426.0"/><polygon points="485.6,213.0 600.0,213.0 600.0,232.4 554.7,254.0 543.9,245.4 507.2,230.3 494.3,223.8"/><polygon points="600.0,316.6 580.6,338.2 574.1,359.8 569.8,383.5 565.5,402.9 569.8,426.0 600.0,426.0"/><polygon points="695.0,262.6 742.5,241.1 768.4,249.7 781.3,269.1 787.8,288.5 781.3,299.3 774.8,308.0 774.8,325.2 736.0,344.7 723.0,336.0 707.9,333.9 699.3,316.6 686.3,288.5 690.7,273.4"/><polygon points="600.0,213.0 613.0,213.0 600.0,223.8"/><polygon points="600.0,325.2 628.1,318.8 658.3,329.6 686.3,327.4 701.4,338.2 707.9,349.0 733.8,394.3 731.7,402.9 755.4,413.7 768.4,426.0 600.0,426.0"/><polygon points="101.4,426.0 127.3,445.4 172.7,426.0"/><polygon points="192.1,426.0 207.2,447.6 224.5,456.2 237.4,460.5 259.0,458.4 276.3,460.5 300.0,456.2 300.0,426.0"/><polygon points="66.9,620.3 114.4,598.7 146.8,607.3 187.8,605.1 215.8,615.9 239.6,639.0 62.6,639.0"/><polygon points="300.0,426.0 375.5,426.0 375.5,430.3 300.0,462.7"/><polygon points="569.8,426.0 600.0,426.0 600.0,475.6 593.5,475.6 574.1,443.3"/><polygon points="600.0,426.0 900.0,426.0 900.0,639.0 600.0,639.0"/><polygon points="768.0,420.0 900.0,420.0 900.0,426.0 768.0,426.0"/><polygon points="900.0,436.8 915.1,469.2 910.8,477.8 923.7,484.3 943.2,488.6 964.8,529.6 954.0,544.7 966.9,553.3 915.1,574.9 900.0,577.1"/><polygon points="62.6,639.0 254.7,639.0 259.0,660.6 246.1,682.2 196.4,708.1 177.0,703.8 164.0,699.4 133.8,697.3 110.1,697.3 92.8,688.6 75.5,667.1 62.6,645.5"/><polygon points="151.1,852.0 194.3,826.8 237.4,803.0 250.4,796.6 300.0,818.1 300.0,852.0"/><polygon points="300.0,822.5 310.8,826.8 328.1,852.0 300.0,852.0"/><polygon points="580.6,680.0 600.0,667.1 600.0,777.1 584.9,781.5 567.6,772.8 541.7,723.2 550.4,701.6"/><polygon points="526.6,852.0 600.0,811.7 600.0,852.0"/><polygon points="600.0,639.0 900.0,639.0 900.0,852.0 600.0,852.0"/><polygon points="900.0,639.0 917.3,639.0 934.5,675.7 923.7,690.8 925.9,701.6 900.0,714.5"/></g>
<defs><clipPath id="h0"><polygon points="577.0,473.5 600.0,473.5 641.0,475.6 656.1,488.6 682.0,497.2 703.6,533.9 723.0,544.7 740.3,549.0 770.5,546.9 763.6,574.4 792.8,631.5 800.0,653.0 795.0,675.0 789.0,684.0 779.0,679.0 764.0,675.0 738.2,628.9 726.8,628.9 714.1,621.3 697.0,629.0 675.9,648.0 657.0,663.0 640.0,659.0 619.6,660.0 600.0,668.0 577.0,677.0"/></clipPath><clipPath id="h1"><polygon points="868.0,580.0 877.0,571.0 900.0,566.0 900.0,595.0 889.0,585.0 882.0,587.0"/></clipPath><clipPath id="h2"><polygon points="587.0,779.0 627.0,776.3 652.3,764.1 663.5,768.2 675.6,791.5 683.7,789.5 691.8,803.7 697.9,801.6 711.1,823.9 719.2,821.9 728.3,836.1 736.4,834.1 745.5,855.0 683.7,855.0 683.7,844.2 671.6,823.9 667.5,813.8 650.3,803.7 639.0,799.6 637.0,792.5 627.0,793.5 587.0,801.0"/></clipPath></defs>
<g clip-path="url(#h0)"><polygon points="577.0,473.5 600.0,473.5 641.0,475.6 656.1,488.6 682.0,497.2 703.6,533.9 723.0,544.7 740.3,549.0 770.5,546.9 763.6,574.4 792.8,631.5 800.0,653.0 795.0,675.0 789.0,684.0 779.0,679.0 764.0,675.0 738.2,628.9 726.8,628.9 714.1,621.3 697.0,629.0 675.9,648.0 657.0,663.0 640.0,659.0 619.6,660.0 600.0,668.0 577.0,677.0" fill="#303030"/><g fill="none" stroke-linejoin="round" stroke-linecap="butt" shape-rendering="geometricPrecision"><polyline points="600.0,473.5 641.0,475.6 656.1,488.6 682.0,497.2 703.6,533.9 723.0,544.7 740.3,549.0 770.5,546.9 763.6,574.4 792.8,631.5 800.0,653.0 795.0,675.0 789.0,684.0" stroke="#9c1042" stroke-width="26"/><polyline points="789.0,684.0 779.0,679.0 764.0,675.0 738.2,628.9 726.8,628.9 714.1,621.3 697.0,629.0 675.9,648.0 657.0,663.0 640.0,659.0 619.6,660.0 600.0,668.0 577.0,677.0" stroke="#9c1042" stroke-width="26"/><polyline points="600.0,473.5 641.0,475.6 656.1,488.6 682.0,497.2 703.6,533.9 723.0,544.7 740.3,549.0 770.5,546.9 763.6,574.4 792.8,631.5 800.0,653.0 795.0,675.0 789.0,684.0" stroke="#c00f2e" stroke-width="16"/><polyline points="789.0,684.0 779.0,679.0 764.0,675.0 738.2,628.9 726.8,628.9 714.1,621.3 697.0,629.0 675.9,648.0 657.0,663.0 640.0,659.0 619.6,660.0 600.0,668.0 577.0,677.0" stroke="#c00f2e" stroke-width="16"/></g></g>
<g clip-path="url(#h1)"><polygon points="868.0,580.0 877.0,571.0 900.0,566.0 900.0,595.0 889.0,585.0 882.0,587.0" fill="#303030"/><g fill="none" stroke-linejoin="round" stroke-linecap="butt" shape-rendering="geometricPrecision"><polyline points="868.0,580.0 877.0,571.0 900.0,566.0" stroke="#9c1042" stroke-width="20"/><polyline points="868.0,580.0 877.0,571.0 900.0,566.0" stroke="#c00f2e" stroke-width="16"/></g></g>
<g clip-path="url(#h2)"><polygon points="587.0,779.0 627.0,776.3 652.3,764.1 663.5,768.2 675.6,791.5 683.7,789.5 691.8,803.7 697.9,801.6 711.1,823.9 719.2,821.9 728.3,836.1 736.4,834.1 745.5,855.0 683.7,855.0 683.7,844.2 671.6,823.9 667.5,813.8 650.3,803.7 639.0,799.6 637.0,792.5 627.0,793.5 587.0,801.0" fill="#303030"/><g fill="none" stroke-linejoin="round" stroke-linecap="butt" shape-rendering="geometricPrecision"><polyline points="587.0,779.0 627.0,776.3 652.3,764.1 663.5,768.2" stroke="#9c1042" stroke-width="20"/><polyline points="683.7,855.0 683.7,844.2 671.6,823.9 667.5,813.8 650.3,803.7 639.0,799.6 637.0,792.5 627.0,793.5 587.0,801.0" stroke="#9c1042" stroke-width="20"/><polyline points="587.0,779.0 627.0,776.3 652.3,764.1 663.5,768.2" stroke="#c00f2e" stroke-width="16"/><polyline points="683.7,855.0 683.7,844.2 671.6,823.9 667.5,813.8 650.3,803.7 639.0,799.6 637.0,792.5 627.0,793.5 587.0,801.0" stroke="#c00f2e" stroke-width="16"/></g></g>
<g fill="#5e6e6b"><rect x="642.3" y="780.4" width="9" height="9" transform="rotate(-26 646.8 784.9)"/><rect x="646.2" y="788.4" width="9" height="9" transform="rotate(-26 650.7 792.9)"/><rect x="663.0" y="801.2" width="9" height="9" transform="rotate(-26 667.5 805.7)"/><rect x="666.9" y="809.3" width="9" height="9" transform="rotate(-26 671.4 813.8)"/><rect x="682.3" y="821.5" width="9" height="9" transform="rotate(-26 686.8 826.0)"/><rect x="686.2" y="829.5" width="9" height="9" transform="rotate(-26 690.7 834.0)"/><rect x="701.0" y="837.7" width="9" height="9" transform="rotate(-26 705.5 842.2)"/><rect x="704.9" y="845.7" width="9" height="9" transform="rotate(-26 709.4 850.2)"/></g>
<g fill="#5e6e6b"><polygon points="768.0,426.0 777.0,433.0 790.0,439.0 788.0,450.0 797.0,452.0 807.0,441.0 831.6,423.3 872.1,423.3 888.3,429.3 900.5,433.4 900.5,403.0 768.0,403.0"/><polygon points="882.0,587.0 889.0,585.0 900.0,595.0 900.0,628.0 891.0,630.0 873.0,588.0"/><polygon points="0.0,701.6 73.4,669.2 75.5,667.1 92.8,688.6 110.1,697.3 133.8,697.3 164.0,699.4 177.0,703.8 174.8,705.9 151.1,721.0 140.3,738.3 118.7,757.7 107.9,772.8 86.3,794.4 75.5,811.7 54.0,828.9 41.0,846.2 36.7,852.0 0.0,852.0"/><polygon points="652.3,764.1 667.5,757.0 670.6,763.1 687.8,755.9 691.8,763.1 716.0,753.0 732.0,763.0 741.5,760.1 745.5,768.2 757.0,763.0 794.3,746.9 807.2,768.5 828.8,777.1 869.8,755.6 880.6,725.3 900.0,714.5 900.0,855.0 744.3,855.0 735.2,834.1 727.1,836.1 718.0,821.9 709.9,823.9 696.7,801.6 690.6,803.7 682.5,789.5 674.4,791.5 662.3,768.2"/></g>
<g fill="#c412c8"><polygon points="507.2,148.9 515.8,148.9 526.6,172.7 535.3,179.1 546.1,185.6 552.5,189.9 578.4,189.9 580.6,198.6 554.7,207.2 541.7,198.6 528.8,194.3 513.7,185.6 511.5,179.1 513.7,170.5"/><polygon points="688.5,62.6 698.2,59.4 701.4,69.1 691.7,71.2"/><polygon points="679.9,86.3 692.8,73.4 701.4,84.2 695.0,101.4 686.3,103.6"/><polygon points="713.3,71.2 722.0,68.0 724.1,76.6 715.5,79.9"/><polygon points="609.7,151.1 625.9,144.6 629.1,153.2 613.0,160.8"/><polygon points="124.1,387.8 148.9,378.1 151.1,386.8 146.8,388.9 146.8,395.4 131.7,404.0"/><polygon points="333.5,295.0 351.8,289.6 352.9,299.3 336.7,304.7"/><polygon points="328.1,347.9 346.4,342.5 348.6,351.1 331.3,356.5"/><polygon points="313.0,400.8 343.2,383.5 347.5,393.2 334.5,398.6 332.4,409.4 315.1,405.1"/><polygon points="300.0,413.7 315.1,408.3 318.3,417.0 304.3,421.3"/><polygon points="615.1,372.7 630.2,359.8 634.5,385.7 621.6,387.8"/><polygon points="660.4,383.5 673.4,368.4 677.7,396.5 664.8,398.6"/><polygon points="682.0,383.5 690.7,379.2 695.0,396.5 686.3,398.6"/><polygon points="608.6,418.1 623.7,410.5 625.9,426.0 610.8,426.0"/><polygon points="727.3,288.5 743.5,282.1 742.5,300.4 733.8,304.7"/><polygon points="615.1,426.0 621.6,426.0 625.9,440.0 619.4,442.2"/><polygon points="651.8,426.0 664.8,426.0 666.9,439.0 658.3,442.2"/><polygon points="675.5,434.6 684.2,432.5 686.3,443.3 682.0,445.4 682.0,453.0 674.5,455.1 672.3,447.6"/><polygon points="720.9,464.9 736.0,460.5 740.3,469.2 723.0,472.4"/><polygon points="733.8,447.6 742.5,445.4 744.6,454.1 736.0,457.3"/><polygon points="720.9,484.3 729.5,482.1 736.0,497.2 727.3,501.5"/><polygon points="744.6,492.9 753.2,490.8 757.6,510.2 744.6,512.3 741.4,505.9"/><polygon points="824.5,464.9 833.1,462.7 841.7,486.4 835.3,489.7"/><polygon points="856.9,469.2 872.0,463.8 875.2,471.3 859.0,477.8"/><polygon points="863.3,505.9 872.0,503.7 874.1,512.3 869.8,523.1 859.0,524.2"/><polygon points="802.9,527.4 811.5,525.3 815.8,540.4 809.4,543.6"/><polygon points="805.1,574.9 828.8,566.3 833.1,573.9 820.2,579.2 826.6,594.4 843.9,615.9 854.7,615.9 856.9,622.4 843.9,627.8 833.1,611.6 818.0,598.7"/><polygon points="902.2,521.0 908.6,516.7 913.0,523.1 921.6,522.1 923.7,529.6 917.3,531.8 906.5,527.4"/><polygon points="105.8,643.3 112.2,639.0 129.5,639.0 131.7,643.3 151.1,647.6 166.2,645.5 183.5,645.5 189.9,652.0 207.2,654.1 213.7,660.6 198.6,667.1 185.6,660.6 166.2,662.7 151.1,658.4 131.7,658.4 112.2,657.3"/><polygon points="233.1,844.1 241.7,841.9 267.6,852.0 235.3,852.0"/><polygon points="582.8,725.3 591.4,722.1 597.9,736.1 589.2,741.5"/><polygon points="705.8,664.9 714.4,661.7 717.6,670.3 709.0,672.5"/><polygon points="701.4,677.9 710.1,674.6 713.3,683.2 704.7,685.4"/><polygon points="744.6,716.7 759.7,712.4 761.9,721.0 746.8,725.3"/><polygon points="833.1,675.7 850.4,669.2 869.8,669.2 891.4,671.4 893.5,680.0 878.4,682.2 846.1,686.5 843.9,710.2 833.1,721.0 826.6,701.6"/><polygon points="828.8,727.5 837.4,725.3 839.6,734.0 831.0,736.1"/><polygon points="610.8,844.1 634.5,834.3 637.8,841.9 613.0,852.0"/></g>
<g fill="none" stroke="#c412c8" stroke-width="12" stroke-linejoin="miter"><polyline points="713.3,86.3 720.9,112.2 738.1,114.4 755.4,116.6 766.2,123.0 777.0,125.2 789.9,129.5 811.5,129.5 824.5,131.7 832.0,142.5"/><polyline points="1025.2,4.3 1031.7,23.7 1046.8,23.7 1055.4,32.4 1066.2,34.5 1064.0,49.6 1057.6,64.8 1059.7,82.0 1072.7,92.8 1083.5,92.8 1086.7,99.3"/><polyline points="231.0,414.8 248.2,412.7 269.8,414.8 300.0,414.8"/><polyline points="615.1,703.8 625.9,708.1 638.9,703.8 669.1,712.4 692.8,716.7 720.9,705.9 725.2,712.4"/><polyline points="614.0,714.5 614.0,734.0 615.1,736.1"/></g>
<g fill="none" stroke="#d83cf2" stroke-width="2.2" stroke-linejoin="round" stroke-linecap="round" shape-rendering="geometricPrecision"><polyline points="510.4,133.8 513.7,140.3 522.3,148.9"/><polyline points="518.0,159.7 528.8,172.7 541.7,172.7 559.0,185.6 567.6,183.5 580.6,181.3"/><polyline points="731.7,45.3 733.8,56.1 729.5,71.2 729.5,90.7 736.0,99.3 751.1,101.4 772.7,105.8 783.5,107.9 802.9,110.1 815.8,114.4 837.4,116.6 850.4,124.1"/><polyline points="619.4,133.8 632.4,139.2"/><polyline points="698.2,60.4 703.6,62.6"/><polyline points="696.1,73.4 701.4,79.9"/><polyline points="1051.1,0.0 1053.2,6.5 1089.9,13.0 1094.3,17.3 1089.9,43.2 1085.6,69.1 1089.9,73.4 1105.1,75.5 1112.6,84.2"/><polyline points="110.1,379.2 112.2,385.7"/><polyline points="124.1,373.8 125.2,383.5"/><polyline points="213.7,401.9 300.0,408.3"/><polyline points="304.3,394.3 328.1,392.1 332.4,377.0"/><polyline points="336.7,286.4 341.0,287.5"/><polyline points="330.2,341.4 335.6,340.3"/><polyline points="628.1,355.5 625.9,374.9 632.4,383.5"/><polyline points="677.7,364.1 673.4,377.0 677.7,385.7"/><polyline points="641.0,451.9 645.3,460.5"/><polyline points="843.9,460.5 848.2,486.4"/><polyline points="824.5,583.6 839.6,578.2"/><polyline points="824.5,583.6 826.6,596.5 846.1,609.5 861.2,631.1"/><polyline points="742.5,449.7 746.8,456.2 738.1,469.2"/><polyline points="815.8,540.4 824.5,527.4"/><polyline points="932.4,522.1 938.9,528.5"/><polyline points="90.7,645.5 95.0,649.8 129.5,652.0 183.5,658.4 187.8,667.1"/><polyline points="615.1,714.5 707.9,725.3 714.4,723.2"/><polyline points="850.4,690.8 861.2,686.5 895.7,685.4"/><polyline points="850.4,690.8 848.2,710.2"/><polyline points="849.3,716.7 841.7,742.6"/><polyline points="725.2,727.5 731.7,723.2"/><polyline points="755.4,736.1 761.9,730.7"/><polyline points="782.4,737.2 784.5,732.9"/><polyline points="651.8,852.0 660.4,844.1 671.2,841.9"/></g>
<g fill="#d83cf2"><ellipse cx="37.8" cy="552.3" rx="1.5" ry="2.5"/><ellipse cx="147.9" cy="578.2" rx="1.5" ry="2.5"/><ellipse cx="590.3" cy="626.7" rx="1.5" ry="2.5"/><ellipse cx="278.4" cy="670.3" rx="1.5" ry="2.5"/><ellipse cx="215.8" cy="664.9" rx="1.5" ry="2.5"/></g>
<g stroke="#a8aeac" stroke-opacity="0.55" stroke-width="1" shape-rendering="geometricPrecision"><line x1="-1438.0" y1="-656.7" x2="-156.5" y2="1976.6"/><line x1="-1273.2" y1="-736.7" x2="8.3" y2="1896.5"/><line x1="-1108.5" y1="-816.8" x2="173.1" y2="1816.4"/><line x1="-943.7" y1="-896.8" x2="337.8" y2="1736.4"/><line x1="-778.9" y1="-976.9" x2="502.6" y2="1656.3"/><line x1="-614.2" y1="-1057.0" x2="667.4" y2="1576.3"/><line x1="-449.4" y1="-1137.0" x2="832.1" y2="1496.2"/><line x1="-284.6" y1="-1217.1" x2="996.9" y2="1416.2"/><line x1="-119.9" y1="-1297.1" x2="1161.7" y2="1336.1"/><line x1="44.9" y1="-1377.2" x2="1326.4" y2="1256.0"/><line x1="209.7" y1="-1457.2" x2="1491.2" y2="1176.0"/><line x1="374.4" y1="-1537.3" x2="1656.0" y2="1095.9"/><line x1="539.2" y1="-1617.4" x2="1820.8" y2="1015.9"/><line x1="704.0" y1="-1697.4" x2="1985.5" y2="935.8"/><line x1="-1607.4" y1="-167.4" x2="1028.9" y2="-1448.3"/><line x1="-1527.3" y1="-2.8" x2="1109.0" y2="-1283.7"/><line x1="-1447.2" y1="161.7" x2="1189.1" y2="-1119.2"/><line x1="-1367.1" y1="326.3" x2="1269.2" y2="-954.6"/><line x1="-1287.0" y1="490.9" x2="1349.3" y2="-790.0"/><line x1="-1206.9" y1="655.5" x2="1429.4" y2="-625.4"/><line x1="-1126.8" y1="820.1" x2="1509.5" y2="-460.9"/><line x1="-1046.7" y1="984.6" x2="1589.6" y2="-296.3"/><line x1="-966.6" y1="1149.2" x2="1669.7" y2="-131.7"/><line x1="-886.5" y1="1313.8" x2="1749.8" y2="32.9"/><line x1="-806.4" y1="1478.4" x2="1829.9" y2="197.5"/><line x1="-726.3" y1="1642.9" x2="1910.0" y2="362.0"/><line x1="-646.2" y1="1807.5" x2="1990.1" y2="526.6"/><line x1="-566.1" y1="1972.1" x2="2070.2" y2="691.2"/></g>
<g transform="translate(348.3,508.4) rotate(11.6)" shape-rendering="geometricPrecision">
<rect x="-40" y="-38" width="13" height="77" fill="#1c1c1c"/>
<rect x="27" y="-38" width="13" height="77" fill="#1c1c1c"/>
<rect x="-41" y="-40" width="14" height="14" rx="3" fill="#3a3a3a"/>
<rect x="-41" y="27" width="14" height="14" rx="3" fill="#3a3a3a"/>
<rect x="27" y="-40" width="14" height="14" rx="3" fill="#3a3a3a"/>
<rect x="27" y="27" width="14" height="14" rx="3" fill="#3a3a3a"/>
<rect x="-26" y="-34" width="5" height="8" rx="2" fill="#e8e8e8"/>
<rect x="22" y="-26" width="5" height="8" rx="2" fill="#e8e8e8"/>
<rect x="20" y="30" width="5" height="8" rx="2" fill="#e8e8e8"/>
<rect x="-24" y="-21" width="40" height="55" rx="6" fill="#d2d2d2"/>
<rect x="-27" y="-6" width="46" height="14" rx="2" fill="#cfcfcf"/>
<rect x="-11" y="-15" width="13" height="12" fill="#262626"/>
<path d="M-20 2 h8 M-4 4 h6 M8 3h4" stroke="#222" stroke-width="2"/>
<circle cx="-16" cy="22" r="2" fill="none" stroke="#777" stroke-width="0.8"/>
</g>
</svg></div>
<div class="a" style="left:910px;top:891px;width:20px;height:1px;background-image:radial-gradient(#a0a0a0 0.6px,transparent 0.8px);background-size:3px 1px"></div>

<!-- time panel -->
<div class="a" style="left:0;top:896px;width:1577px;height:22px;background:#b8b8b8"></div>
<svg class="a" style="left:3px;top:899px" width="16" height="16" viewBox="0 0 16 16"><circle cx="8" cy="8" r="6.8" fill="#fff" stroke="#333" stroke-width="1.6"/><path d="M7.5 3.5 V8.5 H11" fill="none" stroke="#222" stroke-width="1.5"/></svg>
<span class="a" style="left:25px;top:898px;font-size:15px;line-height:19px;letter-spacing:0.3px;color:#2a2a2a">Time</span>
<span class="lbl" style="left:10px">ROS Time:</span>
<div class="inp" style="left:86px;width:142px">1754481233.08</div>
<span class="lbl" style="left:234px">ROS Elapsed:</span>
<div class="inp" style="left:329px;width:142px">418.08</div>
<span class="lbl" style="left:477px">Wall Time:</span>
<div class="inp" style="left:553px;width:142px">1754481233.12</div>
<span class="lbl" style="left:701px">Wall Elapsed:</span>
<div class="inp" style="left:796px;width:142px">418.08</div>
<div class="a" style="left:1px;top:961px;width:53px;height:24px;border:1px solid #b9b9b9;border-radius:3px;background:linear-gradient(#fbfbfb,#efefef);font-size:14.5px;line-height:22px;text-align:center;letter-spacing:0.25px">Reset</div>
<span class="a" style="left:61px;top:963px;font-size:14.5px;line-height:19px;letter-spacing:0.15px;white-space:nowrap;color:#222"><b>Left-Click:</b> Rotate. <b>Middle-Click:</b> Move X/Y. <b>Right-Click/Mouse Wheel:</b> Zoom. <b>Shift:</b> More options.</span>
</body></html>
